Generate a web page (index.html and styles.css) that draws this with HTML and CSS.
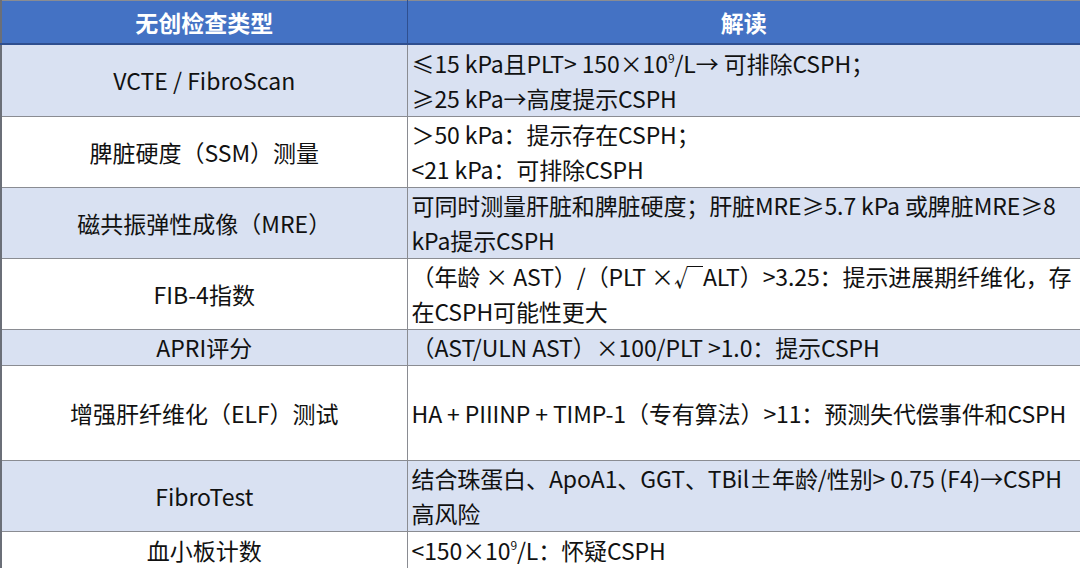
FILE: index.html
```html
<!DOCTYPE html>
<html lang="zh">
<head>
<meta charset="utf-8">
<link rel="stylesheet" href="styles.css">
</head>
<body>
<table class="grid">
  <colgroup><col class="c1"><col class="c2"></colgroup>
  <thead>
    <tr class="head"><th>无创检查类型</th><th>解读</th></tr>
  </thead>
  <tbody>
    <tr class="alt r1"><td class="name">VCTE / FibroScan</td><td class="desc">≤15 kPa且PLT&gt; 150×10<sup>9</sup>/L→ 可排除CSPH；<br>≥25 kPa→高度提示CSPH</td></tr>
    <tr class="r2"><td class="name">脾脏硬度（SSM）测量</td><td class="desc">＞50 kPa：提示存在CSPH；<br>&lt;21 kPa：可排除CSPH</td></tr>
    <tr class="alt r2"><td class="name">磁共振弹性成像（MRE）</td><td class="desc">可同时测量肝脏和脾脏硬度；肝脏MRE≥5.7 kPa 或脾脏MRE≥8 kPa提示CSPH</td></tr>
    <tr class="r4"><td class="name">FIB-4指数</td><td class="desc">（年龄 × AST）/（PLT ×√<span class="ovl"></span>ALT）&gt;3.25：提示进展期纤维化，存在CSPH可能性更大</td></tr>
    <tr class="alt r5"><td class="name">APRI评分</td><td class="desc">（AST/ULN AST）×100/PLT &gt;1.0：提示CSPH</td></tr>
    <tr class="r6"><td class="name">增强肝纤维化（ELF）测试</td><td class="desc">HA + PIIINP + TIMP-1（专有算法）&gt;11：预测失代偿事件和CSPH</td></tr>
    <tr class="alt r2"><td class="name">FibroTest</td><td class="desc">结合珠蛋白、ApoA1、GGT、TBil±年龄/性别&gt; 0.75 (F4)→CSPH高风险</td></tr>
    <tr class="r8"><td class="name">血小板计数</td><td class="desc">&lt;150×10<sup>9</sup>/L：怀疑CSPH</td></tr>
  </tbody>
</table>
</body>
</html>
```
FILE: styles.css
```css
html, body {
  margin: 0;
  padding: 0;
  background: #ffffff;
}
body {
  width: 1080px;
  height: 568px;
  overflow: hidden;
  font-family: "Noto Sans CJK SC", "Noto Sans", sans-serif;
  color: #111111;
}
.grid {
  width: 1080px;
  border-collapse: collapse;
  table-layout: fixed;
  border: 2px solid #6b6f78;
  border-top: 1px solid #6b6f78;
}
.c1 { width: 406px; }
.c2 { width: 674px; }
.grid th, .grid td {
  border: 1px solid #8a8c92;
  padding: 0;
  font-size: 23px;
  line-height: 35px;
}
.head th {
  background: #4472c4;
  color: #ffffff;
  font-weight: 700;
  height: 42px;
  text-align: center;
  border-bottom: 2px solid #2f4f8f;
  border-left-color: #2f4f8f;
  border-right-color: #2f4f8f;
}
.name {
  text-align: center;
}
.desc {
  text-align: left;
  padding: 0 0 0 4px !important;
  letter-spacing: -0.1px;
}
.alt td {
  background: #d9e1f2;
}
.r1 td { height: 71px; }
.r2 td { height: 69px; }
.r4 td { height: 70px; }
.r5 td { height: 34px; }
.r6 td { height: 94px; }
.r8 td { height: 36px; }
sup {
  font-size: 12px;
  line-height: 0;
  vertical-align: 10px;
}
.ovl {
  display: inline-block;
  width: 8px;
  height: 16px;
  border-top: 1px solid #111111;
  vertical-align: 3px;
  margin-left: -2px;
}
```
